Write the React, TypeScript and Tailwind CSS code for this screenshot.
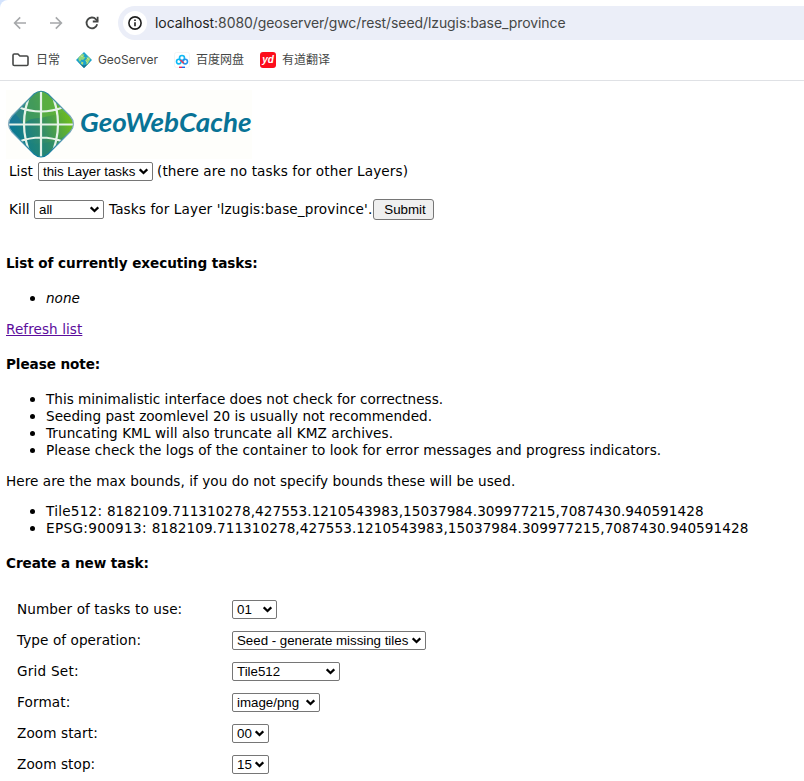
import React from "react";

const sans = "font-['Liberation_Sans',Arial,sans-serif]";

function Select({ label, className }: { label: string; className: string }) {
  return (
    <button
      type="button"
      className={`flex h-[19px] shrink-0 items-center justify-between rounded-[2px] border border-[#767676] bg-white pl-[4px] pr-[4px] text-[13.33px] leading-[17px] whitespace-pre text-black ${sans} ${className}`}
    >
      <span className="tracking-[-0.02px]">{label}</span>
      <svg width="9" height="7" viewBox="0 0 9 7" className="shrink-0" fill="none" stroke="#000" strokeWidth="2.3">
        <path d="M.7 1.300 4.500 5 8.300 1.300" />
      </svg>
    </button>
  );
}

function BackArrow({ flip }: { flip?: boolean }) {
  return (
    <svg width="14" height="14" viewBox="0 0 14 14" className={flip ? "rotate-180" : ""} fill="none" stroke="#a6a8aa" strokeWidth="1.6">
      <path d="M13 7H2M7.2 1.4 1.6 7l5.6 5.6" />
    </svg>
  );
}

function Toolbar() {
  return (
    <div className="flex h-[46px] items-center rounded-tl-[8px] pl-[13px]">
      <BackArrow />
      <div className="ml-[22px]"><BackArrow flip /></div>
      <svg width="14" height="14" viewBox="0 0 14 14" className="ml-[22px]" fill="none" stroke="#454746" strokeWidth="1.8">
        <path d="M12.2 8.3A5.4 5.4 0 1 1 11 3.3L12.8 5" />
        <path d="M12.6.7v4.8H7.8" />
      </svg>
      <div className="ml-[19px] flex h-[34px] flex-1 items-center rounded-l-full bg-[#ebeef8] pl-[5px]">
        <span className="flex size-6 items-center justify-center rounded-full bg-white">
          <svg width="14" height="14" viewBox="0 0 14 14" fill="none" stroke="#1f1f1f" strokeWidth="1.6">
            <circle cx="7" cy="7" r="6.1" />
            <path d="M7 6.2v4M7 3.5v1.5" />
          </svg>
        </span>
        <span className="ml-[8px] whitespace-nowrap font-[Inter,sans-serif] text-[14px] leading-5 tracking-[-0.08px] text-[#454746]">
          <span className="text-[#1f1f1f]">localhost</span>:8080/geoserver/gwc/rest/seed/lzugis:base_province
        </span>
      </div>
    </div>
  );
}

function GeoServerIcon() {
  return (
    <svg width="16" height="16" viewBox="0 0 16 16">
      <path d="M8 0 16 8 8 16 0 8Z" fill="#1ba3cc" />
      <path d="M2.500 5.500 6 2l2.500.500-1 2 2 1-2.500 2.500-1.500-.500L4 10 2.500 8ZM10 2.500l4.500 4.500-1.500 2.500-1.500 3-1.500 1 .500-3.500-1.500-1.500 2-2 1-1.500Z" fill="#93d67b" />
      <path d="M5 3.500 6.500 5M11 5.500l1.500 2M10.500 9.500l1 1" stroke="#e3f09a" fill="none" />
      <path d="M1 9l7 7 7-7-3.500 3L8 13.500 4.500 12Z" fill="#17738f" />
      <path d="m5.500 9.500 2 1-1 2.500-1.500-1.500Z" fill="#b4de75" />
    </svg>
  );
}

function CloudIcon() {
  return (
    <svg width="16" height="16" viewBox="0 0 16 16" fill="none" strokeWidth="1.6">
      <rect x=".5" y=".5" width="15" height="15" rx="2" stroke="#f4f4f4" strokeWidth="1" />
      <circle cx="8" cy="6" r="2.500" stroke="#12b8f2" />
      <circle cx="4.800" cy="9.600" r="2.300" stroke="#08b9f7" />
      <circle cx="11.200" cy="9.600" r="2.300" stroke="#2396ef" />
      <path d="m6.400 8 3.300 3.200" stroke="#ef3754" />
      <path d="M5 15.400h3" stroke="#e82356" />
      <path d="M8 15.400h3" stroke="#176bef" />
    </svg>
  );
}

const bookmark = "whitespace-nowrap text-[12px] leading-4 text-[#454746] font-[Inter,'Noto_Sans_CJK_SC',sans-serif]";

function Bookmarks() {
  return (
    <div className="flex h-[35px] items-center border-b border-[#dfe1e5] pb-[7px] pl-[12px]">
      <svg width="17" height="14" viewBox="0 0 17 14" fill="none" stroke="#454746" strokeWidth="1.6">
        <path d="M1 2.3q0-1.3 1.3-1.3h3.6l2 2h6.8q1.3 0 1.3 1.3v6.9q0 1.3-1.3 1.3H2.3Q1 12.500 1 11.200Z" />
      </svg>
      <span className={`ml-[7px] w-[24px] ${bookmark}`}>日常</span>
      <span className="ml-[16px]"><GeoServerIcon /></span>
      <span className={`ml-[6px] w-[60px] tracking-[-0.08px] ${bookmark}`}>GeoServer</span>
      <span className="ml-[16px]"><CloudIcon /></span>
      <span className={`ml-[6px] w-[48px] ${bookmark}`}>百度网盘</span>
      <span className="ml-[16px] flex size-4 items-center justify-center rounded-[3px] bg-[#fc0d1b] font-['Liberation_Sans',sans-serif] text-[10px] leading-none font-bold text-white italic">yd</span>
      <span className={`ml-[6px] ${bookmark}`}>有道翻译</span>
    </div>
  );
}

function Logo() {
  return (
    <div className="flex h-[75px] w-[252px] items-center">
      <svg width="252" height="75" viewBox="6 86 252 75" fill="none" className="shrink-0">
        <defs>
          <linearGradient id="globe" x1="12" y1="132" x2="73" y2="112" gradientUnits="userSpaceOnUse">
            <stop stopColor="#087995" />
            <stop offset=".45" stopColor="#328b69" />
            <stop offset="1" stopColor="#76c414" />
          </linearGradient>
          <linearGradient id="edge" x1="41" y1="91" x2="41" y2="157" gradientUnits="userSpaceOnUse">
            <stop stopColor="#258697" />
            <stop offset=".5" stopColor="#8fb0c4" />
            <stop offset="1" stopColor="#08799b" />
          </linearGradient>
          <clipPath id="globeClip">
            <path d="M34 94Q41 88.500 48 94L70 116Q77 124 70 132L48 154Q41 160 34 154L12 132Q5 124 12 116Z" />
          </clipPath>
        </defs>
        <path d="M6 90h246v69H6Z" fill="#fefefb" />
        <g clipPath="url(#globeClip)">
          <path d="M5 88h72v72H5Z" fill="url(#globe)" />
          <path d="M26 92H56Q64 112 41 118Q30 117 24 124L14 112Z" fill="#4fa550" opacity=".6" />
          <path d="M41 90H60L66 112 41 118Z" fill="#62b63a" opacity=".6" />
          <path d="M5 104H25L22 125 5 128Z" fill="#23799c" opacity=".55" />
          <path d="M9 135Q35 155 74 131L52 160H31Z" fill="#16817e" opacity=".3" />
          <path d="M41 89v70M6 124.500h71M18 107Q41 116 64 107M18 142Q41 133 64 142M31 92Q17 124 31 156M51 92Q65 124 51 156" stroke="#e5f2e8" strokeWidth="2.200" />
        </g>
        <path d="M34 94Q41 88.500 48 94L70 116Q77 124 70 132L48 154Q41 160 34 154L12 132Q5 124 12 116Z" stroke="url(#edge)" strokeWidth="1.2" />
        <text x="80" y="132" fill="#087396" fontFamily="Lato, sans-serif" fontSize="27" fontWeight="700" fontStyle="italic" textLength="171.500" lengthAdjust="spacingAndGlyphs">GeoWebCache</text>
      </svg>
    </div>
  );
}

const notes = [
  { text: "This minimalistic interface does not check for correctness.", tracking: "tracking-[0px]" },
  { text: "Seeding past zoomlevel 20 is usually not recommended.", tracking: "tracking-[0.01px]" },
  { text: "Truncating KML will also truncate all KMZ archives.", tracking: "tracking-[0.05px]" },
  { text: "Please check the logs of the container to look for error messages and progress indicators.", tracking: "tracking-[0.04px]" },
];

const extent = "8182109.711310278,427553.1210543983,15037984.309977215,7087430.940591428";

const bounds = [
  { lead: "Tile512: ", leadTracking: "tracking-[0.25px]", text: extent, tracking: "tracking-[0.06px]" },
  { lead: "EPSG:900913: ", leadTracking: "tracking-[0.33px]", text: extent, tracking: "tracking-[0.06px]" },
];

const fields = [
  { name: "Number of tasks to use:", value: "01", width: "w-[45px]", tracking: "tracking-[0.1px]" },
  { name: "Type of operation:", value: "Seed - generate missing tiles", width: "w-[194px]", tracking: "tracking-[0.07px]" },
  { name: "Grid Set:", value: "Tile512", width: "w-[108px]", tracking: "tracking-[0.22px]" },
  { name: "Format:", value: "image/png", width: "w-[88px]", tracking: "tracking-[0.15px]" },
  { name: "Zoom start:", value: "00", width: "w-[37px]", tracking: "tracking-[0.1px]" },
  { name: "Zoom stop:", value: "15", width: "w-[37px]", tracking: "tracking-[0.08px]" },
];

type Item = { text: string; tracking: string; lead?: string; leadTracking?: string };

function Bullets({ items, italic }: { items: Item[]; italic?: boolean }) {
  return (
    <ul>
      {items.map((t) => (
        <li key={t.lead ?? t.text} className={`flex h-[17px] items-center pl-[24px] ${italic ? "italic" : ""}`}>
          <span className="mr-[11px] size-[5px] shrink-0 rounded-full bg-black" />
          <span className={t.tracking}>
            {t.lead && <span className={t.leadTracking}>{t.lead}</span>}
            {t.text}
          </span>
        </li>
      ))}
    </ul>
  );
}

export default function App() {
  return (
    <div className="h-[781px] w-[804px] overflow-hidden bg-white">
      <div className="bg-[#d3e3fd]">
        <div className="rounded-tl-[8px] bg-white"><Toolbar /></div>
      </div>
      <Bookmarks />
      <main className="pl-[6px] font-['DejaVu_Sans',Verdana,sans-serif] text-[13.6px] leading-[17px] whitespace-nowrap text-black">
        <div className="pt-[5px]"><Logo /></div>
        <div className="mt-[1px] flex h-[19px] items-center pl-[3px]">
          <span className="w-[29px] tracking-[0.05px]">List</span>
          <Select label="this Layer tasks" className="w-[115px]" />
          <span className="ml-[4px] tracking-[0.11px]">(there are no tasks for other Layers)</span>
        </div>
        <div className="mt-[18px] flex h-[21px] items-center pl-[3px]">
          <span className="w-[25px] tracking-[0.1px]">Kill</span>
          <Select label="all" className="w-[70px]" />
          <span className="ml-[5px] w-[264px] tracking-[0.11px]">Tasks for Layer 'lzugis:base_province'.</span>
          <button type="button" className={`h-[21px] w-[61px] rounded-[3px] border border-[#767676] bg-[#efefef] pl-[3px] text-[13.33px] leading-[17px] ${sans}`}>Submit</button>
        </div>
        <h4 className="mt-[35px] font-bold tracking-[-0.07px]">List of currently executing tasks:</h4>
        <div className="mt-[18px]"><Bullets items={[{ text: "none", tracking: "tracking-normal" }]} italic /></div>
        <p className="mt-[14px] tracking-[0.06px]"><a className="text-[#5c0d9c] underline">Refresh list</a></p>
        <h4 className="mt-[18px] font-bold tracking-[-0.09px]">Please note:</h4>
        <div className="mt-[18px]"><Bullets items={notes} /></div>
        <p className="mt-[14px] tracking-[0.05px]">Here are the max bounds, if you do not specify bounds these will be used.</p>
        <div className="mt-[13px]"><Bullets items={bounds} /></div>
        <h4 className="mt-[18px] font-bold tracking-[-0.06px]">Create a new task:</h4>
        <div className="mt-[28px] flex flex-col gap-[12px] pl-[11px]">
          {fields.map((f) => (
            <div key={f.name} className="flex h-[19px] items-center">
              <span className={`w-[215px] ${f.tracking}`}>{f.name}</span>
              <Select label={f.value} className={f.width} />
            </div>
          ))}
        </div>
      </main>
    </div>
  );
}
